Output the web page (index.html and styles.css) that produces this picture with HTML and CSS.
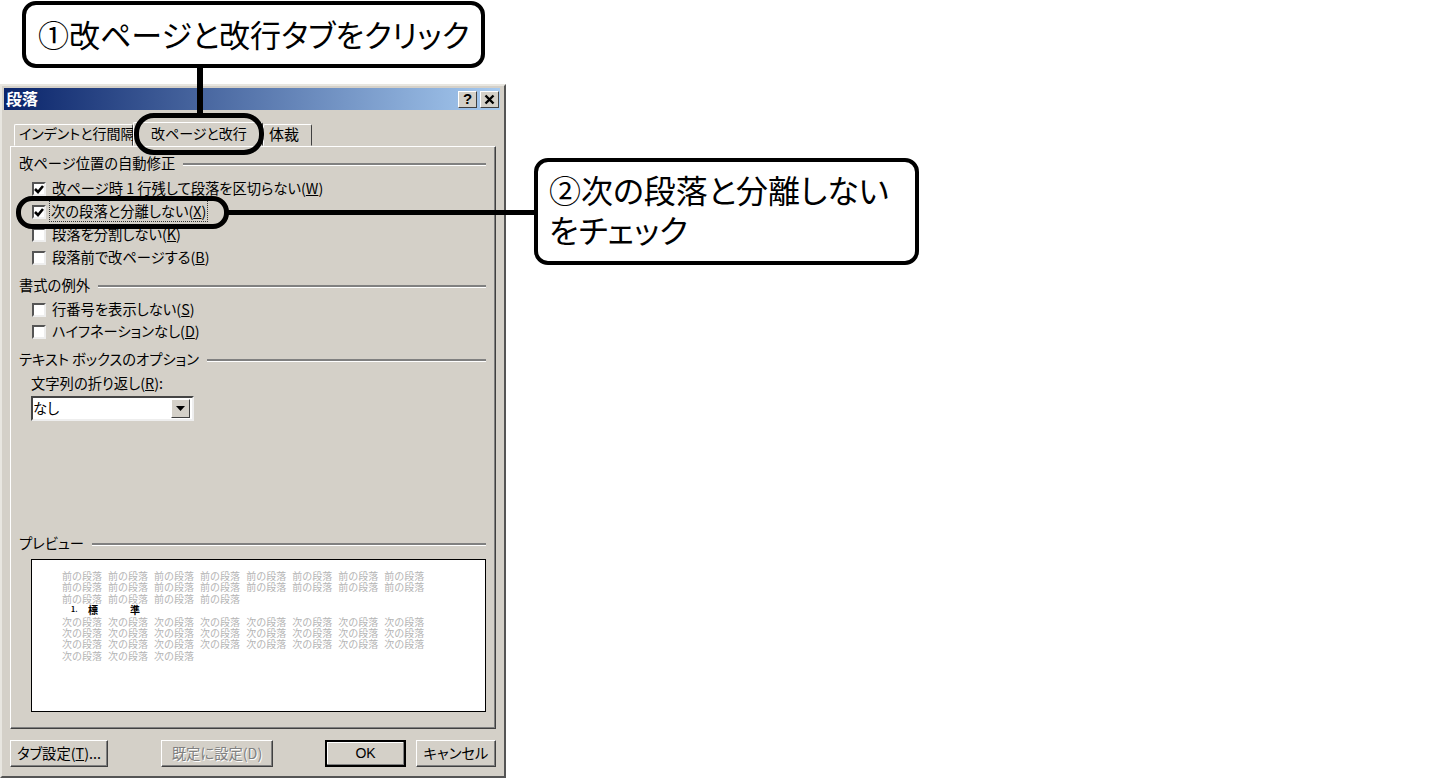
FILE: index.html
```html
<!DOCTYPE html>
<html lang="ja">
<head>
    <meta charset="UTF-8">
    <title>段落</title>
    <link rel="stylesheet" href="styles.css">
</head>
<body>
    <div class="dialog">
        <div class="title-bar">
            <span class="title-text">段落</span>
            <div class="title-buttons">
                <span class="title-btn">?</span>
                <span class="title-btn">
                    <svg width="11" height="11" viewBox="0 0 11 11"><path d="M1.5 1.5l8 8M9.500 1.5l-8 8" stroke="#000" stroke-width="2.4" fill="none"/></svg>
                </span>
            </div>
        </div>

        <div class="dialog-body">
            <div class="tabs">
                <div class="tab tab-indent">インデントと行間隔</div>
                <div class="tab tab-active">改ページと改行</div>
                <div class="tab tab-layout">体裁</div>
            </div>

            <div class="panel">
                <div class="group-label">改ページ位置の自動修正</div>
                <div class="check-list">
                    <div class="check-row"><span class="check checked"><svg width="10" height="10" viewBox="0 0 10 10"><path d="M1 5l3 3 5-6" stroke="#000" stroke-width="2.6" fill="none"/></svg></span><span class="check-text">改ページ時 1 行残して段落を区切らない(<u>W</u>)</span></div>
                    <div class="check-row"><span class="check checked"><svg width="10" height="10" viewBox="0 0 10 10"><path d="M1 5l3 3 5-6" stroke="#000" stroke-width="2.6" fill="none"/></svg></span><span class="check-text focused">次の段落と分離しない(<u>X</u>)</span></div>
                    <div class="check-row"><span class="check"></span><span class="check-text">段落を分割しない(<u>K</u>)</span></div>
                    <div class="check-row"><span class="check"></span><span class="check-text">段落前で改ページする(<u>B</u>)</span></div>
                </div>

                <div class="group-label group-gap">書式の例外</div>
                <div class="check-list">
                    <div class="check-row tight"><span class="check"></span><span class="check-text">行番号を表示しない(<u>S</u>)</span></div>
                    <div class="check-row tight"><span class="check"></span><span class="check-text">ハイフネーションなし(<u>D</u>)</span></div>
                </div>

                <div class="group-label group-gap">テキスト ボックスのオプション</div>
                <div class="field-label">文字列の折り返し(<u>R</u>):</div>
                <div class="select">
                    <span class="select-value">なし</span>
                    <span class="select-arrow"><svg width="9" height="5" viewBox="0 0 9 5"><path d="M0 0h9L4.500 5z" fill="#000"/></svg></span>
                </div>

                <div class="group-label preview-label">プレビュー</div>
                <div class="preview">
                    <div class="preview-line">前の段落 前の段落 前の段落 前の段落 前の段落 前の段落 前の段落 前の段落</div>
                    <div class="preview-line">前の段落 前の段落 前の段落 前の段落 前の段落 前の段落 前の段落 前の段落</div>
                    <div class="preview-line">前の段落 前の段落 前の段落 前の段落</div>
                    <div class="preview-line preview-current"><span class="num">1.</span><span class="w1">標</span><span>準</span></div>
                    <div class="preview-line">次の段落 次の段落 次の段落 次の段落 次の段落 次の段落 次の段落 次の段落</div>
                    <div class="preview-line">次の段落 次の段落 次の段落 次の段落 次の段落 次の段落 次の段落 次の段落</div>
                    <div class="preview-line">次の段落 次の段落 次の段落 次の段落 次の段落 次の段落 次の段落 次の段落</div>
                    <div class="preview-line">次の段落 次の段落 次の段落</div>
                </div>
            </div>

            <div class="buttons">
                <div class="btn btn-tabset"><span>タブ設定(<u>T</u>)...</span></div>
                <div class="btn btn-default disabled"><span>既定に設定(D)</span></div>
                <div class="btn btn-ok"><span>OK</span></div>
                <div class="btn btn-cancel"><span>キャンセル</span></div>
            </div>
        </div>
    </div>

    <!-- 注釈 -->
    <div class="callout callout-1">①改ページと改行タブをクリック</div>
    <div class="line line-v"></div>
    <div class="oval oval-tab"></div>
    <div class="callout callout-2">②次の段落と分離しない<br>をチェック</div>
    <div class="line line-h"></div>
    <div class="oval oval-check"></div>
</body>
</html>
```

FILE: styles.css
```css
* {
    box-sizing: border-box;
}

html, body {
    height: 778px;
    overflow: hidden;
}

body {
    margin: 0;
    background-color: #fff;
    color: #000;
    font-family: "Noto Sans CJK JP", sans-serif;
    font-feature-settings: "palt";
    font-size: 14.3px;
    line-height: 20px;
}

.dialog {
    width: 506px;
    height: 694px;
    margin-top: 84px;
    padding: 2px 4px 0 2px;
    background-color: #d4d0c8;
    border-top: 2px solid #e8e6e0;
    border-left: 2px solid #e8e6e0;
    border-right: 2px solid #555;
    border-bottom: 2px solid #555;
}

.title-bar {
    display: flex;
    align-items: center;
    justify-content: space-between;
    height: 22px;
    padding: 0 1px 0 2px;
    background: linear-gradient(to right, #0a246a, #a6caf0);
}

.title-text {
    margin-bottom: 2px;
    color: #fff;
    font-size: 16px;
    font-weight: 700;
    font-feature-settings: normal;
}

.title-buttons {
    display: flex;
    gap: 3px;
}

.title-btn {
    display: flex;
    align-items: center;
    justify-content: center;
    width: 19px;
    height: 17px;
    background-color: #d4d0c8;
    border: 1px solid;
    border-color: #fff #404040 #404040 #fff;
    font-family: "Liberation Sans", sans-serif;
    font-size: 15px;
    font-weight: 700;
}

.dialog-body {
    padding: 12px 4px 0 6px;
}

.tabs {
    display: flex;
    align-items: flex-end;
    height: 24px;
    padding-left: 4px;
}

.tab {
    height: 22px;
    background-color: #d4d0c8;
    border: 1px solid;
    border-color: #fff #404040 #d4d0c8 #fff;
    border-radius: 2px 2px 0 0;
    font-size: 14px;
    line-height: 17px;
    white-space: nowrap;
}

.tab-indent {
    width: 119px;
    padding-left: 4px;
}

.tab-active {
    width: 130px;
    height: 24px;
    padding-left: 17px;
    line-height: 20px;
}

.tab-layout {
    width: 49px;
    padding-left: 5px;
    font-size: 15px;
}

.panel {
    display: flex;
    flex-direction: column;
    height: 583px;
    padding: 7px 9px 16px 8px;
    border: 1px solid;
    border-color: #fff #404040 #404040 #fff;
    box-shadow: inset -1px -1px 0 #808080;
}

.group-label {
    display: flex;
    align-items: center;
    gap: 8px;
    height: 20px;
    padding-bottom: 2px;
    white-space: nowrap;
}

.group-label::after {
    content: "";
    flex: 1;
    height: 2px;
    margin-top: 2px;
    background-color: #808080;
    border-bottom: 1px solid #fff;
}

.group-gap {
    margin-top: 7px;
}

.check-list {
    padding: 3px 0 0 13px;
}

.check-row {
    display: flex;
    align-items: center;
    gap: 6px;
    height: 23px;
    white-space: nowrap;
}

.check-row.tight {
    height: 22px;
}

.check-text {
    margin-bottom: 2px;
}

.check {
    display: flex;
    align-items: center;
    justify-content: center;
    width: 14px;
    height: 14px;
    background-color: #fff;
    border: 2px solid;
    border-color: #555 #eee #eee #555;
}

.focused {
    margin-left: -2px;
    padding: 0 1px;
    outline: 1px dotted #333;
}

.field-label {
    margin: 3px 0 3px 12px;
}

.select {
    display: flex;
    align-items: center;
    justify-content: space-between;
    width: 163px;
    height: 25px;
    margin-left: 12px;
    padding-right: 2px;
    background-color: #fff;
    border: 2px solid;
    border-color: #444 #eee #eee #444;
}

.select-value {
    margin-bottom: 2px;
}

.select-arrow {
    display: flex;
    align-items: center;
    justify-content: center;
    width: 19px;
    height: 19px;
    background-color: #d4d0c8;
    border: 1px solid;
    border-color: #fff #404040 #404040 #fff;
}

.preview-label {
    margin-top: auto;
}

.preview {
    height: 153px;
    margin: 5px 0 0 12px;
    padding: 10px 0 0 30px;
    background-color: #fff;
    border: 1px solid #000;
    font-feature-settings: normal;
}

.preview-line {
    height: 11.4px;
    color: #b4b4b4;
    font-size: 10px;
    line-height: 11.4px;
    word-spacing: 3.8px;
    white-space: nowrap;
}

.preview-current {
    display: flex;
    padding-left: 9px;
    color: #000;
    font-weight: 700;
}

.preview-current .num {
    width: 17px;
    font-size: 7px;
}

.preview-current .w1 {
    width: 42px;
}

.buttons {
    display: flex;
    height: 27px;
    margin-top: 11px;
}

.btn {
    display: flex;
    align-items: center;
    justify-content: center;
    height: 27px;
    background-color: #d4d0c8;
    border: 1px solid;
    border-color: #fff #404040 #404040 #fff;
    box-shadow: inset -1px -1px 0 #808080;
    white-space: nowrap;
}

.btn span {
    margin-bottom: 2px;
}

.btn-tabset {
    width: 98px;
}

.btn-default {
    width: 112px;
    margin-left: 53px;
}

.btn.disabled {
    color: #808080;
    text-shadow: 1px 1px 0 #fff;
}

.btn-ok {
    width: 81px;
    margin-left: 52px;
    border: 2px solid #000;
    box-shadow: inset -1px -1px 0 #808080, inset 1px 1px 0 #fff;
    font-family: "Liberation Sans", sans-serif;
    font-size: 14px;
}

.btn-cancel {
    width: 80px;
    margin-left: 10px;
}

.callout {
    position: absolute;
    background-color: #fff;
    border: 4px solid #000;
    border-radius: 14px;
    white-space: nowrap;
}

.callout-1 {
    left: 22px;
    top: 1px;
    width: 463px;
    height: 67px;
    padding-left: 12px;
    font-size: 31px;
    line-height: 57px;
}

.callout-2 {
    left: 534px;
    top: 158px;
    width: 385px;
    height: 107px;
    padding: 7px 0 0 11px;
    font-size: 32px;
    line-height: 40px;
}

.line {
    position: absolute;
    background-color: #000;
}

.line-v {
    left: 197px;
    top: 68px;
    width: 6px;
    height: 47px;
}

.line-h {
    left: 227px;
    top: 210px;
    width: 308px;
    height: 5px;
}

.oval {
    position: absolute;
    border: 5px solid #000;
}

.oval-tab {
    left: 134px;
    top: 113px;
    width: 130px;
    height: 42px;
    border-radius: 20px;
}

.oval-check {
    left: 16px;
    top: 196px;
    width: 213px;
    height: 33px;
    border-radius: 16px;
}
```
